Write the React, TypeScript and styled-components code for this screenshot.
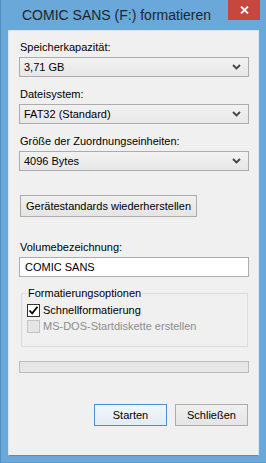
import styled, { createGlobalStyle } from 'styled-components';

const GlobalStyle = createGlobalStyle`
  html, body {
    margin: 0;
    padding: 0;
    background: #6aa7d7;
  }
  body {
    font-family: 'Liberation Sans', Arial, sans-serif;
    font-size: 11px;
    color: #000;
  }
`;

const Frame = styled.div`
  width: 266px;
  height: 463px;
  box-sizing: border-box;
  display: flex;
  flex-direction: column;
  background: #69a8d9;
  border-left: 1px solid #4f8fc4;
  border-bottom: 1px solid #5c9bcd;
  padding: 0 7px 6px 7px;
`;

const TitleBar = styled.div`
  height: 30px;
  display: flex;
  justify-content: space-between;
  align-items: flex-start;
  margin-right: -1px;
`;

const Title = styled.div`
  padding-left: 14px;
  line-height: 30px;
  font-size: 14px;
  color: #1d2630;
`;

const CloseButton = styled.div`
  width: 32px;
  height: 20px;
  background: #c7463d;
  display: flex;
  align-items: center;
  justify-content: center;
`;

const Client = styled.div`
  flex: 1;
  background: #f0f0f0;
  border: 1px solid #d9e6f2;
  border-bottom-color: #4f8fc4;
  padding: 10px 9px 0 10px;
  display: flex;
  flex-direction: column;
`;

const Label = styled.div<{ $top?: number }>`
  line-height: 13px;
  margin-top: ${(p) => p.$top ?? 0}px;
  margin-bottom: 3px;
  padding-left: 1px;
`;

const Combo = styled.div`
  height: 20px;
  box-sizing: border-box;
  border: 1px solid #acacac;
  background: linear-gradient(#f2f2f2, #e7e7e7);
  display: flex;
  align-items: center;
  justify-content: space-between;
  padding: 0 7px 0 4px;
`;

const Input = styled.div`
  height: 20px;
  box-sizing: border-box;
  border: 1px solid #abadb3;
  background: #fff;
  display: flex;
  align-items: center;
  padding: 0 5px;
`;

const Button = styled.div<{ $default?: boolean; $width: number }>`
  width: ${(p) => p.$width}px;
  height: 22px;
  box-sizing: border-box;
  border: 1px solid ${(p) => (p.$default ? '#4a8fd0' : '#acacac')};
  background: ${(p) =>
    p.$default
      ? 'linear-gradient(#f0f6fb, #e4ecf4)'
      : 'linear-gradient(#f0f0f0, #e5e5e5)'};
  display: flex;
  align-items: center;
  justify-content: center;
`;

const ResetRow = styled.div`
  margin-top: 24px;
  padding-left: 1px;
`;

const GroupBox = styled.fieldset`
  margin: 10px 1px 0 2px;
  padding: 3px 5px 13px 5px;
  border: 1px solid #dcdcdc;
  display: flex;
  flex-direction: column;
  gap: 2px;
`;

const Legend = styled.legend`
  padding: 0 1px;
  margin-left: 0;
  line-height: 13px;
`;

const CheckRow = styled.div<{ $disabled?: boolean }>`
  display: flex;
  align-items: center;
  gap: 3px;
  height: 14px;
  color: ${(p) => (p.$disabled ? '#8d8d8d' : '#000')};
`;

const Box = styled.div<{ $disabled?: boolean }>`
  width: 13px;
  height: 13px;
  box-sizing: border-box;
  border: 1px solid ${(p) => (p.$disabled ? '#c4c4c4' : '#333')};
  background: ${(p) => (p.$disabled ? '#e6e6e6' : '#fff')};
  display: flex;
  align-items: center;
  justify-content: center;
`;

const Progress = styled.div`
  margin-top: 14px;
  height: 12px;
  box-sizing: border-box;
  border: 1px solid #bcbcbc;
  background: #e6e6e6;
`;

const Footer = styled.div`
  margin-top: 31px;
  display: flex;
  justify-content: flex-end;
  gap: 8px;
  padding-right: 1px;
`;

const Chevron = () => (
  <svg width="9" height="6" viewBox="0 0 9 6">
    <path d="M1 1 L4.5 4.5 L8 1" fill="none" stroke="#444" strokeWidth="1.8" />
  </svg>
);

const CloseIcon = () => (
  <svg width="9" height="8" viewBox="0 0 9 8">
    <path d="M1 0.5 L8 7.5 M8 0.5 L1 7.5" stroke="#fff" strokeWidth="1.8" />
  </svg>
);

const Check = () => (
  <svg width="11" height="11" viewBox="0 0 11 11">
    <path d="M1.5 5.5 L4.2 8.3 L9.5 1.8" fill="none" stroke="#000" strokeWidth="1.8" />
  </svg>
);

const ComboField = ({ value }: { value: string }) => (
  <Combo>
    <span>{value}</span>
    <Chevron />
  </Combo>
);

export default function App() {
  return (
    <>
      <GlobalStyle />
      <Frame>
        <TitleBar>
          <Title>COMIC SANS (F:) formatieren</Title>
          <CloseButton>
            <CloseIcon />
          </CloseButton>
        </TitleBar>
        <Client>
          <Label>Speicherkapazität:</Label>
          <ComboField value="3,71 GB" />
          <Label $top={11}>Dateisystem:</Label>
          <ComboField value="FAT32 (Standard)" />
          <Label $top={11}>Größe der Zuordnungseinheiten:</Label>
          <ComboField value="4096 Bytes" />
          <ResetRow>
            <Button $width={177}>Gerätestandards wiederherstellen</Button>
          </ResetRow>
          <Label $top={24}>Volumebezeichnung:</Label>
          <Input>COMIC SANS</Input>
          <GroupBox>
            <Legend>Formatierungsoptionen</Legend>
            <CheckRow>
              <Box>
                <Check />
              </Box>
              Schnellformatierung
            </CheckRow>
            <CheckRow $disabled>
              <Box $disabled />
              MS-DOS-Startdiskette erstellen
            </CheckRow>
          </GroupBox>
          <Progress />
          <Footer>
            <Button $default $width={73}>
              Starten
            </Button>
            <Button $width={73}>Schließen</Button>
          </Footer>
        </Client>
      </Frame>
    </>
  );
}
